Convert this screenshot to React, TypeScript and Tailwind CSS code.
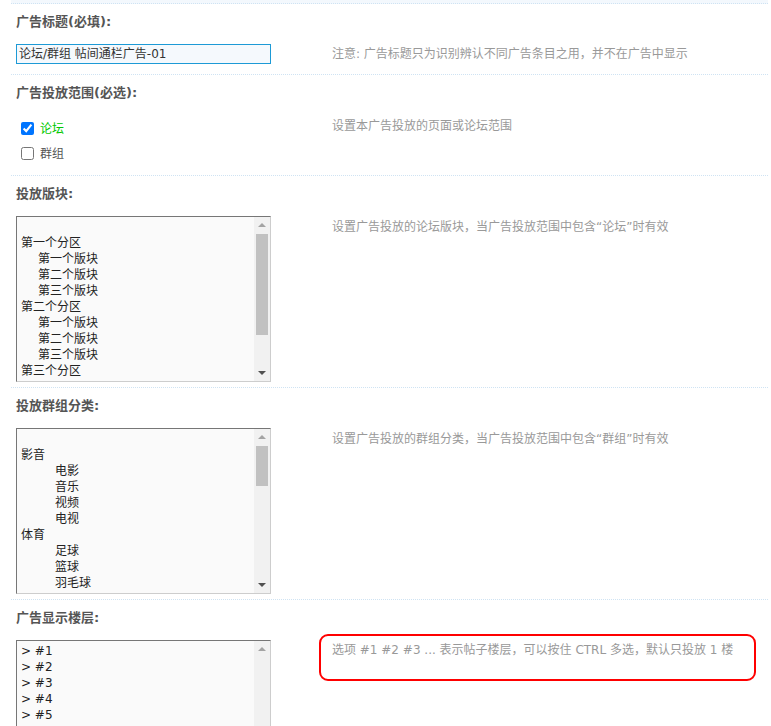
import React from "react";

type Opt = { label: string; indent?: number };

const font = "font-['DejaVu_Sans','Noto_Sans_CJK_SC',sans-serif]";

const forums: Opt[] = [
  { label: "" },
  { label: "第一个分区" },
  { label: "第一个版块", indent: 1 },
  { label: "第二个版块", indent: 1 },
  { label: "第三个版块", indent: 1 },
  { label: "第二个分区" },
  { label: "第一个版块", indent: 1 },
  { label: "第二个版块", indent: 1 },
  { label: "第三个版块", indent: 1 },
  { label: "第三个分区" },
];

const groups: Opt[] = [
  { label: "" },
  { label: "影音" },
  { label: "电影", indent: 2 },
  { label: "音乐", indent: 2 },
  { label: "视频", indent: 2 },
  { label: "电视", indent: 2 },
  { label: "体育" },
  { label: "足球", indent: 2 },
  { label: "篮球", indent: 2 },
  { label: "羽毛球", indent: 2 },
];

const floors: Opt[] = ["#1", "#2", "#3", "#4", "#5"].map((f) => ({
  label: "> " + f,
}));

function ListBox({ items, thumbTop, thumbHeight }: { items: Opt[]; thumbTop: string; thumbHeight: string }) {
  return (
    <div className="flex h-[166px] w-[255px] overflow-hidden border border-t-[#767676] border-l-[#767676] border-r-[#cdcdcd] border-b-[#cdcdcd] bg-[#fafafa]">
      <div className="flex-1 overflow-hidden pt-[2px] pl-[4px]">
        {items.map((o, i) => (
          <div
            key={i}
            className={
              "h-[16px] whitespace-pre text-[12px] leading-[16px] text-[#222] " +
              (o.indent === 1 ? "pl-[17px]" : o.indent === 2 ? "pl-[34px]" : "")
            }
          >
            {o.label}
          </div>
        ))}
      </div>
      <div className="flex w-[16px] flex-col bg-[#f1f1f1]">
        <div className="flex h-[16px] shrink-0 items-center justify-center">
          <div className="h-0 w-0 border-x-[4px] border-b-[4px] border-x-transparent border-b-[#a3a3a3]" />
        </div>
        <div className={"mx-[2px] shrink-0 bg-[#c1c1c1] " + thumbTop + " " + thumbHeight} />
        <div className="flex-1" />
        <div className="flex h-[16px] shrink-0 items-center justify-center">
          <div className="h-0 w-0 border-x-[4px] border-t-[4px] border-x-transparent border-t-[#505050]" />
        </div>
      </div>
    </div>
  );
}

function Label({ children }: { children: React.ReactNode }) {
  return <div className="pt-[8px] text-[13px] font-bold leading-[20px] text-[#555]">{children}</div>;
}

function Note({ children, className = "" }: { children: React.ReactNode; className?: string }) {
  return <div className={"text-[12px] leading-[20px] text-[#999] " + className}>{children}</div>;
}

export default function App() {
  return (
    <div className={"min-h-screen bg-white pl-[11px] pr-[3px] " + font}>
      <div className="h-[4px] border-b border-dotted border-b-[#cfe3f3] bg-[#f3f8fd]" />

      <div className="border-b border-dotted border-b-[#cfe3f3] pb-[10px] pl-[5px]">
        <Label>广告标题(必填):</Label>
        <div className="mt-[12px] grid grid-cols-[316px_1fr] items-center">
          <div className="flex h-[20px] w-[255px] items-center border border-[#1d9ad6] bg-[#f5f9fd] pl-[2px] text-[12px] text-[#333]">
            论坛/群组 帖间通栏广告-01
          </div>
          <Note>注意: 广告标题只为识别辨认不同广告条目之用，并不在广告中显示</Note>
        </div>
      </div>

      <div className="border-b border-dotted border-b-[#cfe3f3] pb-[9px] pl-[5px]">
        <Label>广告投放范围(必选):</Label>
        <div className="mt-[13px] grid grid-cols-[316px_1fr]">
          <div className="flex flex-col pl-[5px]">
            <label className="flex h-[25px] items-center gap-[6px] text-[12px] text-[#00c800]">
              <input type="checkbox" defaultChecked className="m-0 h-[13px] w-[13px] accent-[#0075ff]" />
              论坛
            </label>
            <label className="flex h-[25px] items-center gap-[6px] text-[12px] text-[#555]">
              <input type="checkbox" className="m-0 h-[13px] w-[13px]" />
              群组
            </label>
          </div>
          <Note>设置本广告投放的页面或论坛范围</Note>
        </div>
      </div>

      <div className="border-b border-dotted border-b-[#cfe3f3] pb-[5px] pl-[5px]">
        <Label>投放版块:</Label>
        <div className="mt-[12px] grid grid-cols-[316px_1fr]">
          <ListBox items={forums} thumbTop="mt-[1px]" thumbHeight="h-[101px]" />
          <Note className="pt-[1px]">设置广告投放的论坛版块，当广告投放范围中包含“论坛”时有效</Note>
        </div>
      </div>

      <div className="border-b border-dotted border-b-[#cfe3f3] pb-[5px] pl-[5px]">
        <Label>投放群组分类:</Label>
        <div className="mt-[12px] grid grid-cols-[316px_1fr]">
          <ListBox items={groups} thumbTop="mt-[1px]" thumbHeight="h-[40px]" />
          <Note className="pt-[1px]">设置广告投放的群组分类，当广告投放范围中包含“群组”时有效</Note>
        </div>
      </div>

      <div className="pb-[5px] pl-[5px]">
        <Label>广告显示楼层:</Label>
        <div className="mt-[12px] grid grid-cols-[316px_1fr]">
          <ListBox items={floors} thumbTop="mt-[90px]" thumbHeight="h-[40px]" />
          <div className="-ml-[13px] -mt-[6px] h-[47px] w-[437px] rounded-[9px] border-2 border-[#f00] pl-[11px] pt-[4px]">
            <Note>选项 #1 #2 #3 ... 表示帖子楼层，可以按住 CTRL 多选，默认只投放 1 楼</Note>
          </div>
        </div>
      </div>
    </div>
  );
}
